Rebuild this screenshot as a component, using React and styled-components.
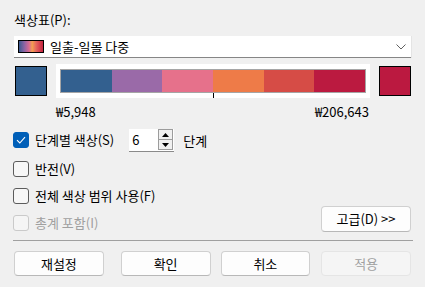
import styled, { createGlobalStyle } from 'styled-components';

const GlobalStyle = createGlobalStyle`
  html, body {
    margin: 0;
    padding: 0;
    background: #f0f0f0;
  }
  body {
    font-family: "Noto Sans CJK KR", "Noto Sans", sans-serif;
    font-size: 13px;
    color: #000;
  }
`;

const Dialog = styled.div`
  width: 425px;
  height: 287px;
  box-sizing: border-box;
  padding: 12px 14px 0 14px;
  background: #f0f0f0;
`;

const Label = styled.div`
  height: 16px;
  line-height: 16px;
`;

const Combo = styled.div`
  margin-top: 8px;
  height: 21px;
  background: #fff;
  border-bottom: 1px solid #868686;
  display: flex;
  align-items: center;
  padding: 0 5px 0 4px;
  box-shadow: 1px 0 0 #e4e4e4;
`;

const PaletteIcon = styled.div`
  width: 24px;
  height: 11px;
  border: 1px solid #000;
  background: linear-gradient(to right, #3a5a8f 0%, #8a64a4 22%, #d86a92 42%, #f4a050 55%, #e66a5e 70%, #d84450 85%, #c0243f 100%);
`;

const ComboText = styled.span`
  margin-left: 6px;
  line-height: 16px;
  flex: 1;
`;

const SwatchRow = styled.div`
  margin-top: 6px;
  height: 34px;
  display: flex;
  align-items: center;
  gap: 9px;
`;

const Swatch = styled.div`
  width: 30px;
  height: 28px;
  border: 1px solid #000;
  background: ${p => p.$color};
  margin-left: ${p => p.$offset || 0}px;
`;

const BarBox = styled.div`
  width: 314px;
  height: 34px;
  box-sizing: border-box;
  background: #fff;
  padding: 5px 4px 0 4px;
`;

const Bar = styled.div`
  height: 22px;
  border: 1px solid #a5a5a5;
  display: flex;
`;

const Segment = styled.div`
  flex: 1;
  background: ${p => p.$color};
`;

const Tick = styled.div`
  width: 1px;
  height: 5px;
  background: #000;
  margin-left: 153px;
`;

const ValueRow = styled.div`
  margin-top: 6px;
  margin-left: 42px;
  width: 313px;
  height: 16px;
  line-height: 16px;
  display: flex;
  justify-content: space-between;
  font-size: 13px;
`;

const Options = styled.div`
  margin-left: -1px;
`;

const Row = styled.div`
  display: flex;
  align-items: center;
  margin-top: ${p => p.$top}px;
  height: ${p => p.$height || 16}px;
`;

const BottomRow = styled.div`
  display: flex;
  align-items: flex-end;
  justify-content: space-between;
  margin-top: 2px;
  height: 26px;
  margin-left: -1px;
`;

const CheckLabel = styled.label`
  display: flex;
  align-items: center;
  gap: 6px;
  line-height: 16px;
  color: ${p => (p.$disabled ? '#a0a0a0' : '#000')};
  margin-bottom: ${p => p.$bottom || 0}px;
`;

const Box = styled.span`
  width: 16px;
  height: 16px;
  box-sizing: border-box;
  border-radius: 3px;
  display: flex;
  align-items: center;
  justify-content: center;
  background: ${p => (p.$checked ? '#005fb8' : p.$disabled ? '#f5f5f5' : '#f7f7f7')};
  border: 1px solid ${p => (p.$checked ? '#005fb8' : p.$disabled ? '#cacaca' : '#5c5c5c')};
`;

const Spin = styled.div`
  margin-left: 15px;
  width: 45px;
  height: 23px;
  box-sizing: border-box;
  background: #fff;
  border-bottom: 1px solid #8a8a8a;
  display: flex;
  align-items: center;
  padding-left: 3px;
`;

const SpinValue = styled.span`
  flex: 1;
  font-size: 13px;
`;

const SpinButtons = styled.div`
  width: 15px;
  height: 21px;
  display: flex;
  flex-direction: column;
  margin-right: 1px;
`;

const SpinButton = styled.div`
  flex: 1;
  box-sizing: border-box;
  border: 1px solid #9c9c9c;
  background: #f0f0f0;
  display: flex;
  align-items: center;
  justify-content: center;
  & + & {
    border-top: none;
  }
`;

const Unit = styled.span`
  margin-left: 9px;
`;

const Separator = styled.div`
  margin-top: 8px;
  height: 1px;
  background: #a0a0a0;
  margin-left: -1px;
  margin-right: -2px;
`;

const ButtonRow = styled.div`
  margin-top: 10px;
  display: flex;
`;

const Button = styled.div`
  width: 90px;
  height: 25px;
  box-sizing: border-box;
  border-radius: 4px;
  display: flex;
  align-items: center;
  justify-content: center;
  background: ${p => (p.$disabled ? '#f5f5f5' : '#fdfdfd')};
  border: 1px solid ${p => (p.$disabled ? '#e5e5e5' : '#d0d0d0')};
  border-bottom-color: ${p => (p.$disabled ? '#e5e5e5' : '#b8b8b8')};
  color: ${p => (p.$disabled ? '#a0a0a0' : '#000')};
  margin-left: ${p => p.$gap || 0}px;
  line-height: 16px;
`;

const AdvancedButton = styled(Button)`
  height: 26px;
`;

const Checkbox = ({ checked, disabled }) => (
  <Box $checked={checked} $disabled={disabled}>
    {checked && (
      <svg width="10" height="8" viewBox="0 0 10 8">
        <path d="M1 4.2 L3.8 7 L9 1.2" fill="none" stroke="#fff" strokeWidth="1.1" />
      </svg>
    )}
  </Box>
);

const colors = ['#33608f', '#9a6aa8', '#e6718b', '#ee7b48', '#d64c46', '#bb1a40'];

const App = () => {
  return (
    <>
      <GlobalStyle />
      <Dialog>
        <Label>색상표(P):</Label>
        <Combo>
          <PaletteIcon />
          <ComboText>일출-일몰 다중</ComboText>
          <svg width="10" height="6" viewBox="0 0 10 6">
            <path d="M0.5 0.5 L5 5 L9.5 0.5" fill="none" stroke="#606060" strokeWidth="1" />
          </svg>
        </Combo>
        <SwatchRow>
          <Swatch $color="#33608f" $offset={1} />
          <BarBox>
            <Bar>
              {colors.map(c => (
                <Segment key={c} $color={c} />
              ))}
            </Bar>
            <Tick />
          </BarBox>
          <Swatch $color="#bb1940" />
        </SwatchRow>
        <ValueRow>
          <span>₩5,948</span>
          <span>₩206,643</span>
        </ValueRow>
        <Options>
          <Row $top={8} $height={24}>
            <CheckLabel>
              <Checkbox checked />
              단계별 색상(S)
            </CheckLabel>
            <Spin>
              <SpinValue>6</SpinValue>
              <SpinButtons>
                <SpinButton>
                  <svg width="7" height="4" viewBox="0 0 7 4">
                    <path d="M0 4 L3.5 0 L7 4 Z" fill="#000" />
                  </svg>
                </SpinButton>
                <SpinButton>
                  <svg width="7" height="4" viewBox="0 0 7 4">
                    <path d="M0 0 L3.5 4 L7 0 Z" fill="#000" />
                  </svg>
                </SpinButton>
              </SpinButtons>
            </Spin>
            <Unit>단계</Unit>
          </Row>
          <Row $top={9}>
            <CheckLabel>
              <Checkbox />
              반전(V)
            </CheckLabel>
          </Row>
          <Row $top={11}>
            <CheckLabel>
              <Checkbox />
              전체 색상 범위 사용(F)
            </CheckLabel>
          </Row>
        </Options>
        <BottomRow>
          <CheckLabel $disabled $bottom={1}>
            <Checkbox disabled />
            총계 포함(I)
          </CheckLabel>
          <AdvancedButton>고급(D) &gt;&gt;</AdvancedButton>
        </BottomRow>
        <Separator />
        <ButtonRow>
          <Button>재설정</Button>
          <Button $gap={17}>확인</Button>
          <Button $gap={10}>취소</Button>
          <Button $gap={11} $disabled>적용</Button>
        </ButtonRow>
      </Dialog>
    </>
  );
};

export default App;
